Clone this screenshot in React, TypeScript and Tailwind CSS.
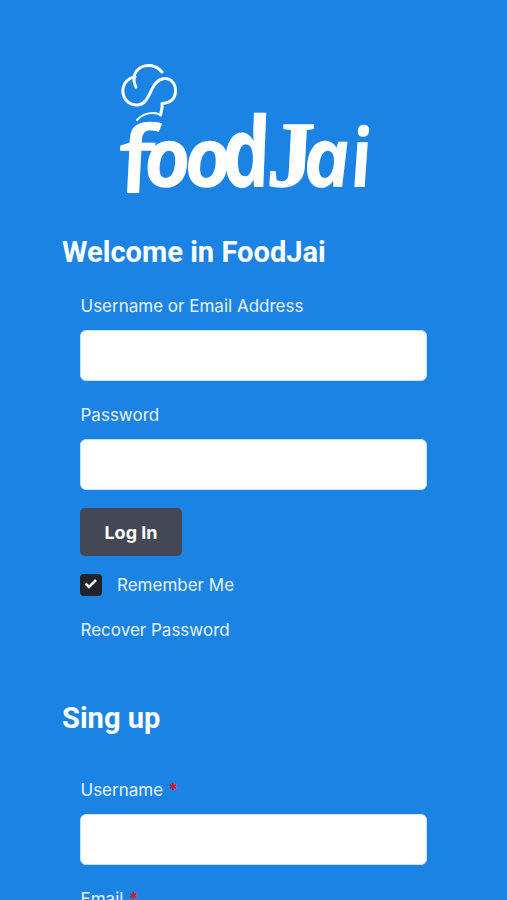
import React from "react";

function Logo() {
  return (
    <svg viewBox="0 0 260 140" className="ml-[115px] block h-[140px] w-[260px] overflow-visible" fill="none" role="img" aria-label="foodJai">
      <g stroke="#fff" strokeWidth="3" strokeLinecap="round" strokeLinejoin="round">
        <path d="M47 12 C41 5 33 4 26.500 7 C19 11 17 19 21 27" />
        <path d="M20 17 C12 18 7 25 8 33 C9 41 16 45.500 23 45 C37 43 34 21 49 18.500 C57 18 61 25 60.500 32 C60 39 55 43 47 43.500 C48 48 46 52 45.500 55" />
        <path d="M22 60 C28 53 39 51 46 55" strokeWidth="2" />
      </g>
      <g fill="#fff" className="font-['Open_Sans',sans-serif] text-[83px] font-bold italic">
        <text transform="translate(1 133) skewX(-3) scale(1.080 .96)" className="text-[97px] font-semibold not-italic">f</text>
        <text transform="translate(30 127) skewX(3) scale(.97 1)">o</text>
        <text transform="translate(70.500 127) skewX(3) scale(.97 1)">o</text>
        <text transform="translate(110 127) skewX(8) scale(1 1.180)">d</text>
        <text transform="translate(151 126) skewX(-3) scale(.98 .98)" className="font-['Liberation_Serif',serif] text-[95px] not-italic" stroke="#fff" strokeWidth="1.500">J</text>
        <text transform="translate(190 127) skewX(5) scale(.97 1)">a</text>
        <text transform="translate(234 127) skewX(-4) scale(.84 1)" className="text-[82px] not-italic">i</text>
      </g>
    </svg>
  );
}

function Field({ label, required = false }: { label: string; required?: boolean }) {
  return (
    <label className="block h-[108.500px]">
      <span className="ml-[0.500px] flex h-[22px] items-center text-[17px] leading-[22px]">
        {label}
        {required && <span className="ml-[5px] font-black text-[#e01230]">*</span>}
      </span>
      <input className="mt-[13px] block h-[51px] w-[347px] rounded-[6px] border border-[#c5e0fa] bg-white px-3 text-black outline-none" />
    </label>
  );
}

export default function App() {
  return (
    <main className="h-[900px] overflow-hidden bg-[#1b83e4] pt-[60px] font-['Inter',sans-serif] text-[#e6f3ff]">
      <Logo />
      <h1 className="ml-[62px] mt-[34px] h-[36px] whitespace-nowrap font-['Roboto',sans-serif] text-[29.100px] font-bold leading-[36px] text-white">Welcome in FoodJai</h1>
      <form className="ml-[80px] mt-[25px]">
        <Field label="Username or Email Address" />
        <Field label="Password" />
        <button type="button" className="-mt-[4px] block h-[48px] w-[102px] rounded-[5px] bg-[#444854] text-[18px] font-bold text-white">Log In</button>
        <div className="mt-[18px] flex h-[22px] items-center gap-[15px] text-[17px]">
          <span className="flex size-[22px] items-center justify-center rounded-[4px] bg-[#202329]">
            <svg viewBox="0 0 14 12" className="-mt-[2px] h-[12px] w-[14px]" fill="none" stroke="#fff" strokeWidth="2.500"><path d="M1.500 5.500 5 9 12 2" /></svg>
          </span>
          <span className="pt-[2px]">Remember Me</span>
        </div>
        <a className="ml-[0.500px] mt-[23px] block h-[22px] text-[17px] leading-[22px]">Recover Password</a>
      </form>
      <h2 className="ml-[62px] mt-[59px] h-[36px] font-['Roboto',sans-serif] text-[29.100px] font-bold leading-[36px] text-white">Sing up</h2>
      <form className="ml-[80px] mt-[43px]">
        <Field label="Username" required />
        <Field label="Email" required />
      </form>
    </main>
  );
}
